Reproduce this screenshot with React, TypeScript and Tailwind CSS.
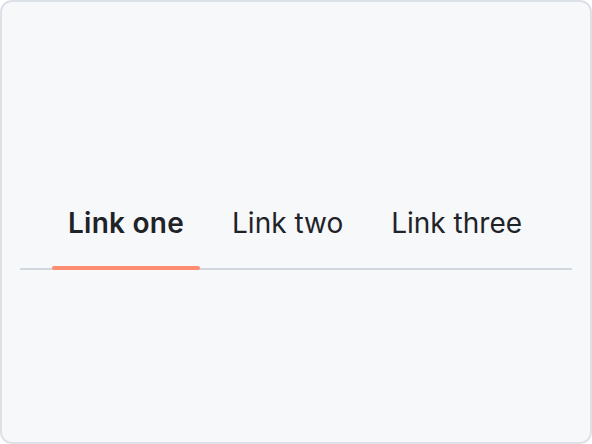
import React from "react";

export default function App() {
  const items = ["Link one", "Link two", "Link three"];
  return (
    <div className="w-[592px] h-[444px] bg-white">
      <div
        className="w-full h-full rounded-[12px] border-2 border-[#dde2e8] bg-[#f6f8fa] flex flex-col justify-center px-[18px]"
        style={{ fontFamily: "Inter, 'Noto Sans', sans-serif" }}
      >
        <nav className="h-[96px] border-b-2 border-[#d0d7de] flex gap-[16px] pl-[32px]">
          {items.map((t, i) => (
            <a
              key={t}
              className={
                "relative flex items-center px-[16px] pt-[4px] text-[28px] leading-none text-[#1f2328] " +
                (i === 0 ? "font-semibold tracking-[0.25px]" : "font-normal")
              }
            >
              {t}
              {i === 0 && (
                <span className="absolute left-0 right-0 bottom-[-2px] h-[4px] bg-[#fd8c73] rounded-[4px]" />
              )}
            </a>
          ))}
        </nav>
      </div>
    </div>
  );
}
